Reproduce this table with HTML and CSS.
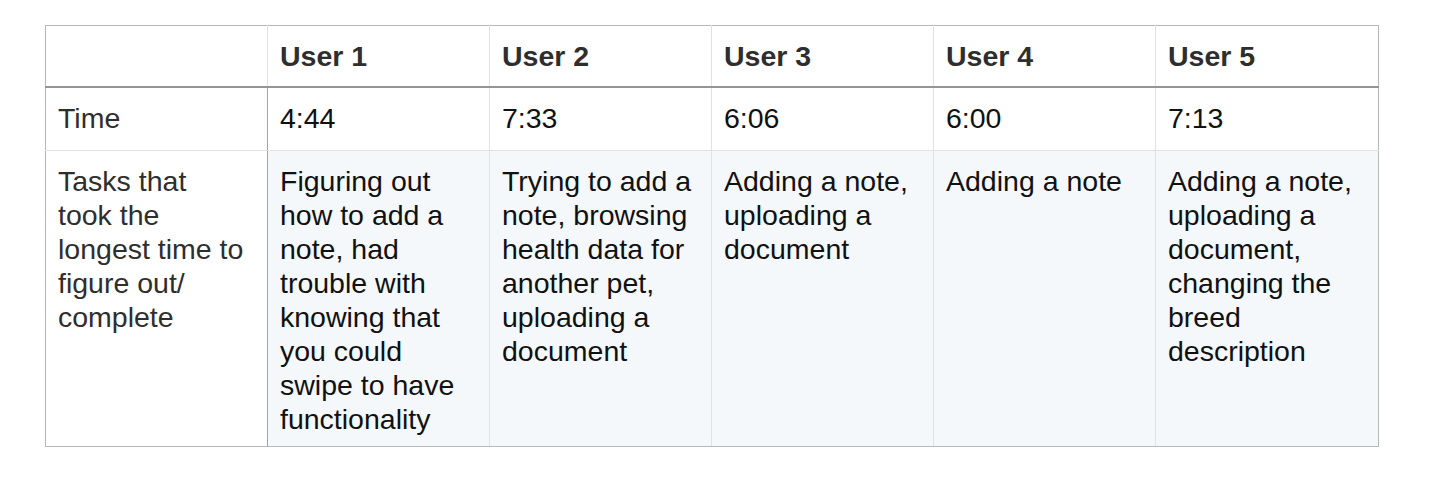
FILE: index.html
```html
<!DOCTYPE html>
<html lang="en">
<head>
<meta charset="utf-8">
<title>Usability test results</title>
<link rel="stylesheet" href="styles.css">
</head>
<body>
<table class="results">
  <colgroup>
    <col class="c-label">
    <col class="c-user"><col class="c-user"><col class="c-user"><col class="c-user"><col class="c-last">
  </colgroup>
  <thead>
    <tr>
      <th class="corner"></th>
      <th>User 1</th>
      <th>User 2</th>
      <th>User 3</th>
      <th>User 4</th>
      <th>User 5</th>
    </tr>
  </thead>
  <tbody>
    <tr class="row-time">
      <td class="label">Time</td>
      <td>4:44</td>
      <td>7:33</td>
      <td>6:06</td>
      <td>6:00</td>
      <td>7:13</td>
    </tr>
    <tr class="row-tasks">
      <td class="label">Tasks that<br>took the<br>longest time to<br>figure out/<br>complete</td>
      <td>Figuring out<br>how to add a<br>note, had<br>trouble with<br>knowing that<br>you could<br>swipe to have<br>functionality</td>
      <td>Trying to add a<br>note, browsing<br>health data for<br>another pet,<br>uploading a<br>document</td>
      <td>Adding a note,<br>uploading a<br>document</td>
      <td>Adding a note</td>
      <td>Adding a note,<br>uploading a<br>document,<br>changing the<br>breed<br>description</td>
    </tr>
  </tbody>
</table>
</body>
</html>
```
FILE: styles.css
```css
html, body {
  margin: 0;
  background: #ffffff;
}
body {
  padding: 25px 0 0 45px;
  font-family: "Liberation Sans", Arial, Helvetica, sans-serif;
}
.results {
  border-collapse: collapse;
  table-layout: fixed;
  width: 1333px;
  font-size: 28.5px;
  line-height: 34px;
  color: #111111;
}
.c-label, .c-user { width: 222px; }
.c-last { width: 223px; }
.results th,
.results td {
  text-align: left;
  vertical-align: top;
  padding: 13px 11px 13px 12px;
  border: 1px solid #e2e2e2;
  white-space: nowrap;
  overflow: hidden;
}
.results th {
  font-weight: bold;
  color: #2e2e2e;
  border-top-color: #b8b8b8;
  border-bottom: 2px solid #959595;
}
.results tr > :first-child {
  border-left-color: #b8b8b8;
}
.results tr > :last-child {
  border-right-color: #b8b8b8;
}
.results tbody tr:last-child > * {
  border-bottom-color: #b8b8b8;
}
.results td.label {
  color: #2e2e2e;
  border-right: 1px solid #a3a3a3;
}
.row-time td {
  padding-bottom: 15px;
}
.row-tasks td {
  padding-bottom: 10px;
  background: #f4f8fb;
}
.row-tasks td.label {
  background: #ffffff;
}
```
